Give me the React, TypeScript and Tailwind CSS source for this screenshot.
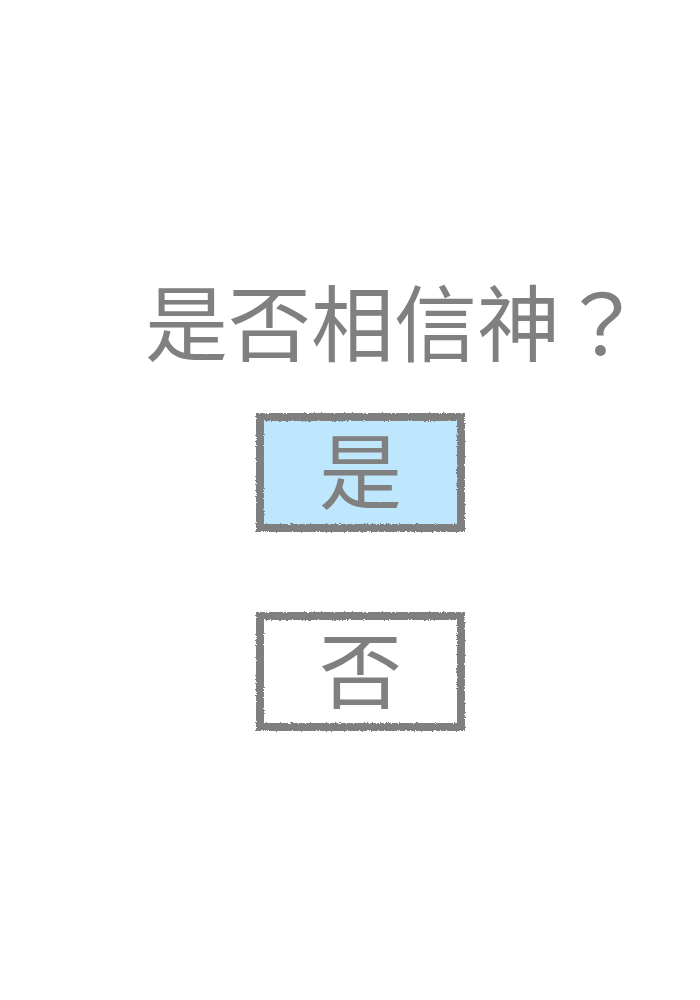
import React from "react";

const cjk = {
  fontFamily: '"Noto Sans CJK TC", "Noto Sans CJK JP", sans-serif',
};

function ChoiceButton({ label, selected }: { label: string; selected?: boolean }) {
  return (
    <button
      type="button"
      className="relative ml-[256px] flex h-[119px] w-[209px] items-center justify-center pb-[10px]"
    >
      {/* hand-drawn frame: border + fill pushed through a small turbulence filter */}
      <span
        className={`absolute inset-0 border-[8px] border-[#7f7f7f] [filter:url(#chalk)] ${
          selected ? "bg-[#bee6fc]" : "bg-white"
        }`}
      />
      <span
        className="relative text-[83px] leading-none text-[#808080]"
        style={cjk}
      >
        {label}
      </span>
    </button>
  );
}

export default function App() {
  return (
    <div className="flex h-[1000px] w-[700px] flex-col bg-white pt-[278px]">
      <svg className="absolute h-0 w-0" aria-hidden="true">
        <filter id="chalk" x="-5%" y="-5%" width="110%" height="110%">
          <feTurbulence type="fractalNoise" baseFrequency="0.6" numOctaves="2" seed="3" />
          <feDisplacementMap in="SourceGraphic" scale="3" xChannelSelector="R" yChannelSelector="G" />
        </filter>
      </svg>
      <h1
        className="ml-[145px] whitespace-nowrap text-[83px] font-normal leading-none text-[#808080]"
        style={cjk}
      >
        是否相信神？
      </h1>
      <div className="mt-[52px] flex flex-col gap-[80px]">
        <ChoiceButton label="是" selected />
        <ChoiceButton label="否" />
      </div>
    </div>
  );
}
